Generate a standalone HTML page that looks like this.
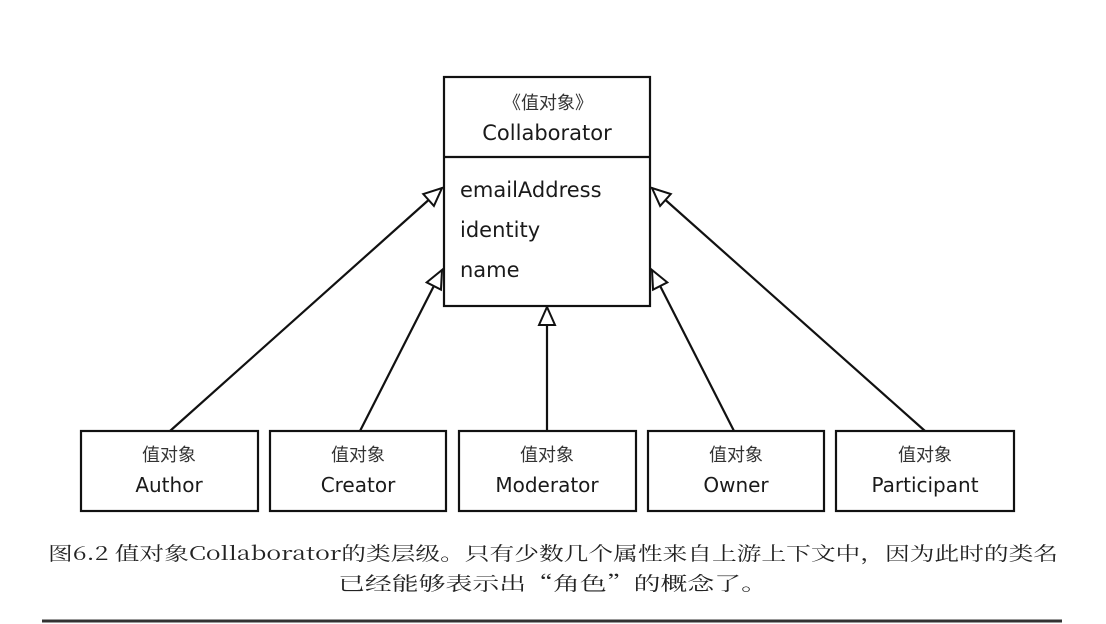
<!DOCTYPE html>
<html><head><meta charset="utf-8"><style>
html,body{margin:0;padding:0;background:#fff;}
svg{display:block;}
text{font-family:"DejaVu Sans","Liberation Sans","Noto Sans CJK SC",sans-serif;fill:#1a1a1a;}
.cj{font-family:"Noto Sans CJK SC",sans-serif;fill:#333;}
.cap{font-family:"Noto Serif CJK SC","Liberation Serif",serif;fill:#222;}
</style></head><body>
<svg width="1106" height="624" viewBox="0 0 1106 624" xmlns="http://www.w3.org/2000/svg">
<defs>
<marker id="a" markerUnits="userSpaceOnUse" markerWidth="24" markerHeight="24" refX="20" refY="10" orient="auto">
<path d="M2,2 L20,10 L2,18 Z" fill="#fff" stroke="#111" stroke-width="2"/>
</marker>
</defs>
<g stroke="#111" stroke-width="2.2" fill="none">
<line x1="170" y1="431" x2="442" y2="188" marker-end="url(#a)"/>
<line x1="360" y1="431" x2="442" y2="270" marker-end="url(#a)"/>
<line x1="547" y1="431" x2="547" y2="307" marker-end="url(#a)"/>
<line x1="734" y1="431" x2="652" y2="270" marker-end="url(#a)"/>
<line x1="925" y1="431" x2="652" y2="188" marker-end="url(#a)"/>
<rect x="444" y="77" width="206" height="229" fill="#fff"/>
<line x1="444" y1="157" x2="650" y2="157"/>
<rect x="81" y="431" width="177" height="80" fill="#fff"/>
<rect x="270" y="431" width="176" height="80" fill="#fff"/>
<rect x="459" y="431" width="177" height="80" fill="#fff"/>
<rect x="648" y="431" width="176" height="80" fill="#fff"/>
<rect x="836" y="431" width="178" height="80" fill="#fff"/>
</g>
<text class="cj" x="548" y="109" font-size="18" text-anchor="middle">《值对象》</text>
<text x="547" y="140" font-size="21" text-anchor="middle">Collaborator</text>
<text x="460" y="197" font-size="21">emailAddress</text>
<text x="460" y="237" font-size="21">identity</text>
<text x="460" y="277" font-size="21">name</text>
<g class="cj" font-size="18" text-anchor="middle">
<text class="cj" x="169" y="461">值对象</text><text class="cj" x="358" y="461">值对象</text><text class="cj" x="547" y="461">值对象</text><text class="cj" x="736" y="461">值对象</text><text class="cj" x="925" y="461">值对象</text>
</g>
<g font-size="20" text-anchor="middle">
<text x="169" y="492">Author</text><text x="358" y="492">Creator</text><text x="547" y="492">Moderator</text><text x="736" y="492">Owner</text><text x="925" y="492">Participant</text>
</g>
<text class="cap" x="553" y="560" font-size="19" text-anchor="middle" textLength="1010" lengthAdjust="spacingAndGlyphs">图6.2 值对象Collaborator的类层级。只有少数几个属性来自上游上下文中，因为此时的类名</text>
<text class="cap" x="553" y="590" font-size="19" text-anchor="middle" textLength="430" lengthAdjust="spacingAndGlyphs">已经能够表示出“角色”的概念了。</text>
<line x1="42" y1="621" x2="1062" y2="621" stroke="#333" stroke-width="3"/>
</svg>
</body></html>
